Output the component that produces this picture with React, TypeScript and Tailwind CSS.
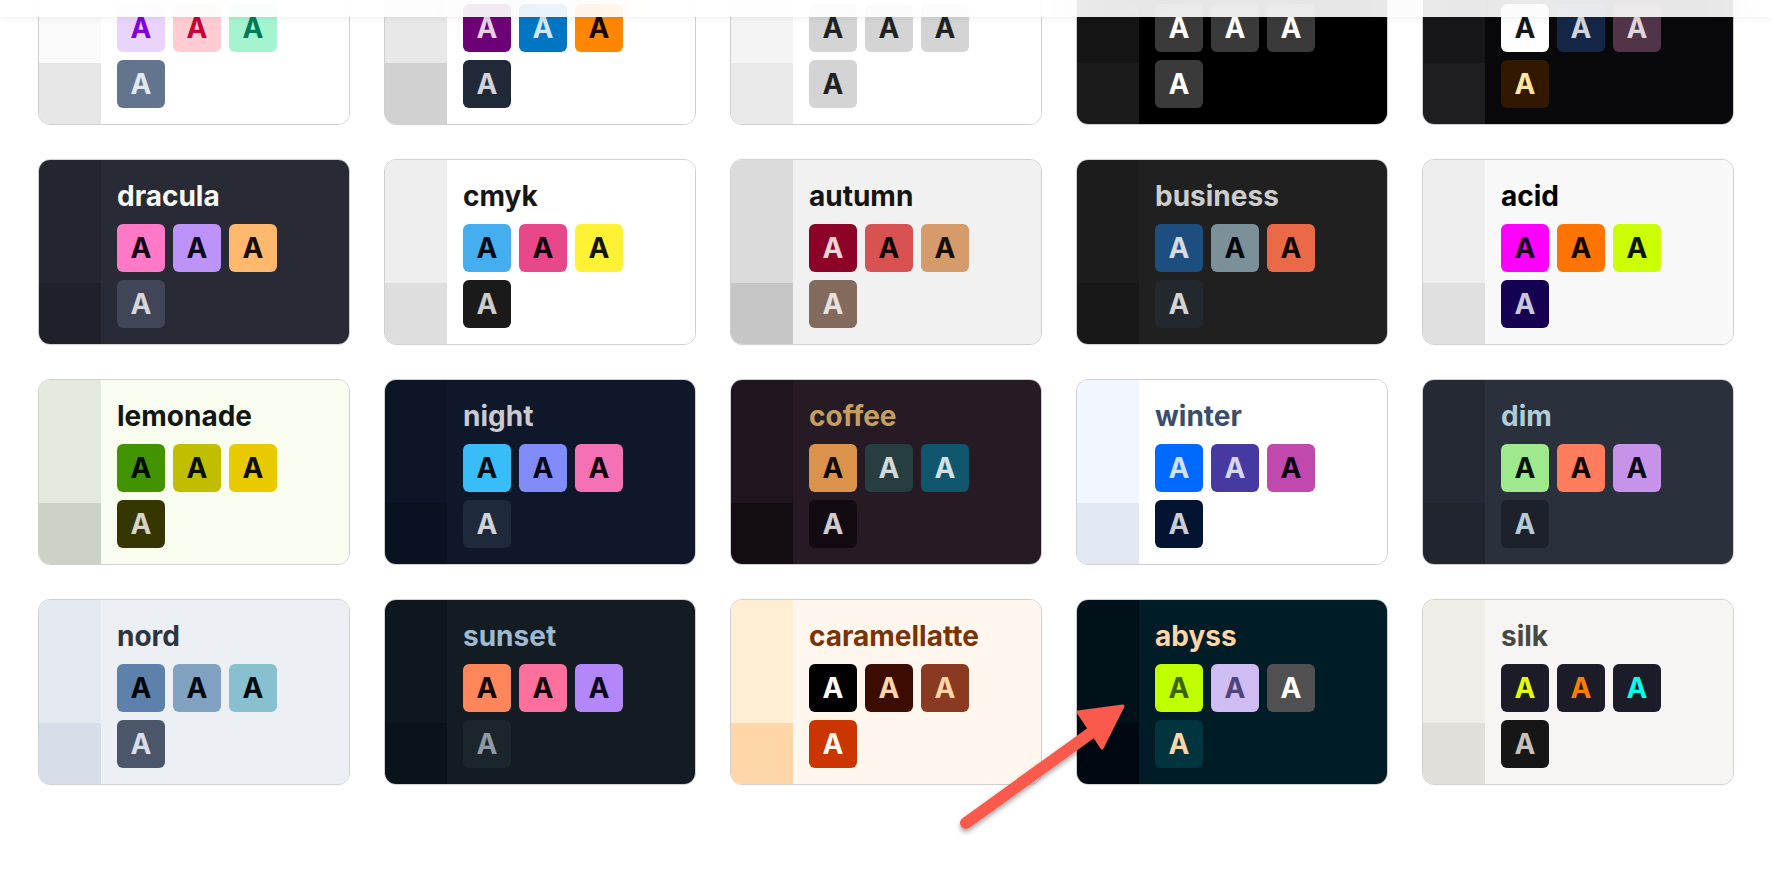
import React from 'react'

interface Swatch {
  bg: string
  fg: string
}

interface Theme {
  name: string
  base100: string
  base200: string
  base300: string
  content: string
  swatches: Swatch[]
}

const themes: Theme[] = [
  {
    name: 'pastel',
    base100: '#ffffff',
    base200: '#fafafa',
    base300: '#e6e6e6',
    content: '#161616',
    swatches: [
      { bg: '#e9d4ff', fg: '#8200db' },
      { bg: '#ffccd3', fg: '#c70036' },
      { bg: '#a4f4cf', fg: '#007a55' },
      { bg: '#62748e', fg: '#e2e8f0' },
    ],
  },
  {
    name: 'fantasy',
    base100: '#ffffff',
    base200: '#e8e8e8',
    base300: '#d1d1d1',
    content: '#1f2937',
    swatches: [
      { bg: '#6d0076', fg: '#e7d0e6' },
      { bg: '#0075c2', fg: '#d1e6f9' },
      { bg: '#ff8600', fg: '#190800' },
      { bg: '#1f2937', fg: '#d1d5db' },
    ],
  },
  {
    name: 'wireframe',
    base100: '#ffffff',
    base200: '#f4f4f4',
    base300: '#eaeaea',
    content: '#222222',
    swatches: [
      { bg: '#d4d4d4', fg: '#222222' },
      { bg: '#d4d4d4', fg: '#222222' },
      { bg: '#d4d4d4', fg: '#222222' },
      { bg: '#d4d4d4', fg: '#222222' },
    ],
  },
  {
    name: 'black',
    base100: '#000000',
    base200: '#141414',
    base300: '#1b1b1b',
    content: '#d6d6d6',
    swatches: [
      { bg: '#3a3a3a', fg: '#ffffff' },
      { bg: '#3a3a3a', fg: '#ffffff' },
      { bg: '#3a3a3a', fg: '#ffffff' },
      { bg: '#3a3a3a', fg: '#ffffff' },
    ],
  },
  {
    name: 'luxury',
    base100: '#09090b',
    base200: '#171618',
    base300: '#1e1d1f',
    content: '#dca54c',
    swatches: [
      { bg: '#ffffff', fg: '#161616' },
      { bg: '#152747', fg: '#d0d4dc' },
      { bg: '#513448', fg: '#ded6dc' },
      { bg: '#331800', fg: '#ffe7a3' },
    ],
  },
  {
    name: 'dracula',
    base100: '#282a36',
    base200: '#232530',
    base300: '#1f2029',
    content: '#f8f8f2',
    swatches: [
      { bg: '#ff79c6', fg: '#16050e' },
      { bg: '#bd93f9', fg: '#0d0815' },
      { bg: '#ffb86c', fg: '#160c02' },
      { bg: '#414558', fg: '#d6d7db' },
    ],
  },
  {
    name: 'cmyk',
    base100: '#ffffff',
    base200: '#eeeeee',
    base300: '#dedede',
    content: '#161616',
    swatches: [
      { bg: '#45aeee', fg: '#000b17' },
      { bg: '#e8488a', fg: '#14000a' },
      { bg: '#fff234', fg: '#161400' },
      { bg: '#1a1a1a', fg: '#cccccc' },
    ],
  },
  {
    name: 'autumn',
    base100: '#f1f1f1',
    base200: '#dbdbdb',
    base300: '#c6c6c6',
    content: '#141414',
    swatches: [
      { bg: '#8c0327', fg: '#ecd5d7' },
      { bg: '#d85251', fg: '#120404' },
      { bg: '#d59b6a', fg: '#150d05' },
      { bg: '#826a5c', fg: '#e6e1de' },
    ],
  },
  {
    name: 'business',
    base100: '#202020',
    base200: '#1c1c1c',
    base300: '#181818',
    content: '#cdcdcd',
    swatches: [
      { bg: '#1c4e80', fg: '#d4dbe6' },
      { bg: '#7c909a', fg: '#050708' },
      { bg: '#ea6947', fg: '#140503' },
      { bg: '#23282e', fg: '#d4d4d5' },
    ],
  },
  {
    name: 'acid',
    base100: '#f8f8f8',
    base200: '#eeeeee',
    base300: '#e0e0e0',
    content: '#000000',
    swatches: [
      { bg: '#ff00ff', fg: '#1a0019' },
      { bg: '#ff7400', fg: '#160600' },
      { bg: '#cbfd03', fg: '#0f1400' },
      { bg: '#140151', fg: '#c8c8e0' },
    ],
  },
  {
    name: 'lemonade',
    base100: '#f8fdef',
    base200: '#e3eadb',
    base300: '#cdd3c4',
    content: '#151612',
    swatches: [
      { bg: '#419400', fg: '#010b00' },
      { bg: '#bfbf00', fg: '#0e0e00' },
      { bg: '#e9c900', fg: '#120e00' },
      { bg: '#353600', fg: '#d4d4c9' },
    ],
  },
  {
    name: 'night',
    base100: '#0f172a',
    base200: '#0c1425',
    base300: '#0a1120',
    content: '#c9cbd1',
    swatches: [
      { bg: '#38bdf8', fg: '#010d15' },
      { bg: '#818cf8', fg: '#070616' },
      { bg: '#f471b5', fg: '#17040c' },
      { bg: '#1e293b', fg: '#d0d3d7' },
    ],
  },
  {
    name: 'coffee',
    base100: '#261b25',
    base200: '#1f151e',
    base300: '#130c12',
    content: '#c59f60',
    swatches: [
      { bg: '#db924b', fg: '#110703' },
      { bg: '#263e3f', fg: '#d1d9da' },
      { bg: '#10576d', fg: '#d0e0e5' },
      { bg: '#120c12', fg: '#cfcbce' },
    ],
  },
  {
    name: 'winter',
    base100: '#ffffff',
    base200: '#f2f7ff',
    base300: '#e3e9f4',
    content: '#394e6a',
    swatches: [
      { bg: '#0069ff', fg: '#d0e1ff' },
      { bg: '#463aa2', fg: '#d6d7f3' },
      { bg: '#c148ac', fg: '#0e0010' },
      { bg: '#021431', fg: '#c9cdd5' },
    ],
  },
  {
    name: 'dim',
    base100: '#2a303c',
    base200: '#242933',
    base300: '#20252e',
    content: '#b2ccd6',
    swatches: [
      { bg: '#9fe88d', fg: '#081306' },
      { bg: '#ff7d5c', fg: '#160503' },
      { bg: '#c792e9', fg: '#0e0813' },
      { bg: '#1c212b', fg: '#b2ccd6' },
    ],
  },
  {
    name: 'nord',
    base100: '#eceff4',
    base200: '#e5e9f0',
    base300: '#d8dee9',
    content: '#2e3440',
    swatches: [
      { bg: '#5e81ac', fg: '#000609' },
      { bg: '#81a1c1', fg: '#05080c' },
      { bg: '#88c0d0', fg: '#050b0d' },
      { bg: '#4c566a', fg: '#d8dee9' },
    ],
  },
  {
    name: 'sunset',
    base100: '#121c22',
    base200: '#0e171e',
    base300: '#09131a',
    content: '#9fb9d0',
    swatches: [
      { bg: '#ff865b', fg: '#160703' },
      { bg: '#fd6f9c', fg: '#160309' },
      { bg: '#b387fa', fg: '#0b0616' },
      { bg: '#1b262c', fg: '#8f9aa2' },
    ],
  },
  {
    name: 'caramellatte',
    base100: '#fff7ed',
    base200: '#ffedd4',
    base300: '#ffd6a7',
    content: '#7b3306',
    swatches: [
      { bg: '#000000', fg: '#ffffff' },
      { bg: '#3d0c00', fg: '#ffd6a7' },
      { bg: '#8a3a20', fg: '#ffd6a7' },
      { bg: '#ca3500', fg: '#fff7ed' },
    ],
  },
  {
    name: 'abyss',
    base100: '#001c27',
    base200: '#00111a',
    base300: '#000811',
    content: '#ffd6a7',
    swatches: [
      { bg: '#c0ff00', fg: '#3e6400' },
      { bg: '#cfbcf2', fg: '#514377' },
      { bg: '#505050', fg: '#ffffff' },
      { bg: '#00353f', fg: '#ffd6a7' },
    ],
  },
  {
    name: 'silk',
    base100: '#f7f5f3',
    base200: '#f1ede9',
    base300: '#e2deda',
    content: '#4b4743',
    swatches: [
      { bg: '#1c1c29', fg: '#e2ff00' },
      { bg: '#1c1c29', fg: '#ff7d00' },
      { bg: '#1c1c29', fg: '#00ffec' },
      { bg: '#161616', fg: '#c6c1bd' },
    ],
  },
]

function SwatchBox({ swatch }: { swatch: Swatch }) {
  return (
    <div
      className="flex h-12 w-12 items-center justify-center rounded-md text-[28px] leading-none font-bold"
      style={{ backgroundColor: swatch.bg, color: swatch.fg }}
    >
      A
    </div>
  )
}

function ThemeCard({ theme }: { theme: Theme }) {
  return (
    <div className="grid h-[186px] grid-cols-5 grid-rows-3 overflow-hidden rounded-xl border-[1.5px] border-[#cfcfcf]">
      <div
        className="col-start-1 row-span-2 row-start-1"
        style={{ backgroundColor: theme.base200 }}
      />
      <div
        className="col-start-1 row-start-3"
        style={{ backgroundColor: theme.base300 }}
      />
      <div
        className="col-span-4 col-start-2 row-span-3 row-start-1 flex flex-col p-4"
        style={{ backgroundColor: theme.base100 }}
      >
        <div
          className="mb-[8px] text-[28px] leading-[40px] font-bold"
          style={{ color: theme.content }}
        >
          {theme.name}
        </div>
        <div className="flex w-[160px] flex-wrap gap-2">
          {theme.swatches.map((s, i) => (
            <SwatchBox key={i} swatch={s} />
          ))}
        </div>
      </div>
    </div>
  )
}

function Arrow() {
  return (
    <svg
      className="pointer-events-none absolute top-[690px] left-[950px]"
      width="190"
      height="160"
      viewBox="0 0 190 160"
    >
      <defs>
        <filter id="arrowShadow" x="-20%" y="-20%" width="140%" height="140%">
          <feDropShadow dx="0" dy="3" stdDeviation="2.5" floodColor="#000" floodOpacity="0.35" />
        </filter>
      </defs>
      <g filter="url(#arrowShadow)" fill="#f95a4c" stroke="#f95a4c">
        <line x1="16" y1="133" x2="145" y2="40" strokeWidth="12" strokeLinecap="round" />
        <polygon points="173,16 128,22 152,58" strokeWidth="3" strokeLinejoin="round" />
      </g>
    </svg>
  )
}

export default function App() {
  return (
    <div className="relative h-[870px] overflow-hidden bg-white font-['Inter',sans-serif]">
      <div className="fixed inset-x-0 top-0 z-10 h-[17px] bg-white/90 shadow-[0_2px_6px_rgba(0,0,0,0.06)] backdrop-blur-xl" />
      <div className="mt-[-61px] grid grid-cols-5 gap-x-[34px] gap-y-[34px] px-[38px]">
        {themes.map((t) => (
          <ThemeCard key={t.name} theme={t} />
        ))}
      </div>
      <Arrow />
    </div>
  )
}
